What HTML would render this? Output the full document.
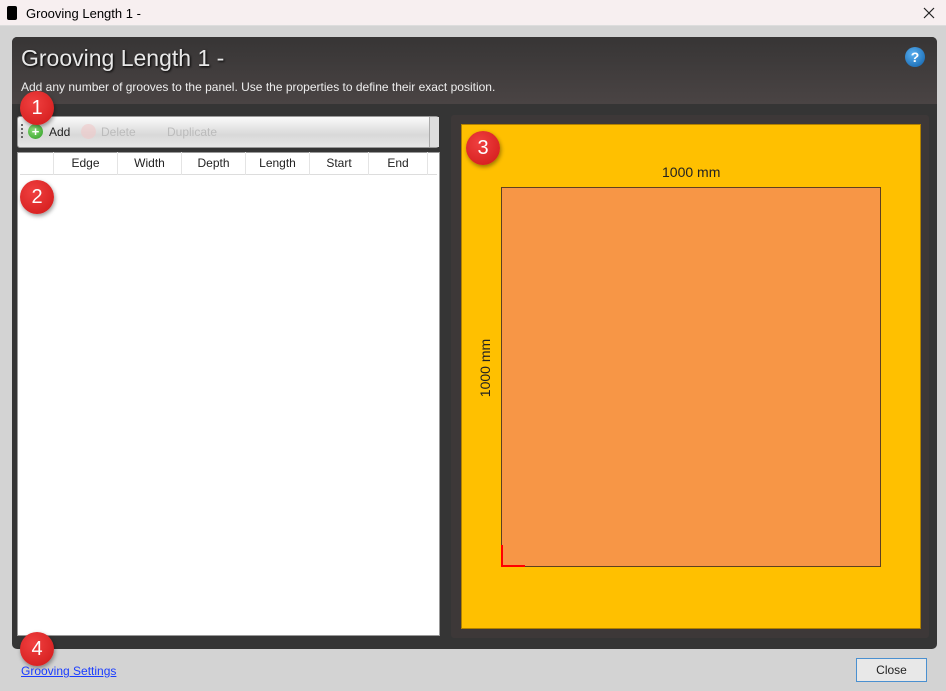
<!DOCTYPE html><html><head><style>
*{margin:0;padding:0;box-sizing:border-box}
body{width:946px;height:691px;background:#d3d3d3;font-family:"Liberation Sans",sans-serif;position:relative;overflow:hidden}
.a{position:absolute}
.badge{position:absolute;width:34px;height:34px;border-radius:50%;background:radial-gradient(circle at 40% 35%,#f04040,#d01818);color:#fff;font-size:20px;text-align:center;line-height:34px;box-shadow:1px 2px 4px rgba(0,0,0,.4)}
.hd{position:absolute;top:152px;height:23px;font-size:12px;color:#222;text-align:center;line-height:23px;border-right:1px solid #e4e4e4}
</style></head><body>
<div class="a" style="left:0;top:0;width:946px;height:26px;background:#f7eff0;border-bottom:1px solid #ddd"></div>
<div class="a" style="left:7px;top:6px;width:10px;height:14px;background:#000;border-radius:2px"></div>
<div class="a" style="left:26px;top:6px;font-size:13px;color:#000">Grooving Length 1 -</div>
<svg class="a" style="left:923px;top:7px" width="12" height="12"><path d="M1 1L11 11M11 1L1 11" stroke="#222" stroke-width="1.2"/></svg>
<div class="a" style="left:12px;top:37px;width:925px;height:612px;background:#353535;border-radius:5px"></div>
<div class="a" style="left:12px;top:37px;width:925px;height:67px;background:linear-gradient(#373535,#4a4444);border-radius:5px 5px 0 0"></div>
<div class="a" style="left:21px;top:45px;font-size:23px;color:#e8e8e8;text-shadow:1px 1px 2px #000">Grooving Length 1 -</div>
<div class="a" style="left:21px;top:80px;font-size:12px;color:#eee">Add any number of grooves to the panel. Use the properties to define their exact position.</div>
<div class="a" style="left:905px;top:47px;width:20px;height:20px;border-radius:50%;background:radial-gradient(circle at 40% 35%,#5ab0f0,#0d5ea8);color:#fff;font-weight:bold;font-size:14px;text-align:center;line-height:20px">?</div>
<div class="a" style="left:17px;top:116px;width:422px;height:32px;background:linear-gradient(#fafafa,#d8d8d8 60%,#e8e8e8);border:1px solid #999;border-radius:3px"></div>
<div class="a" style="left:429px;top:117px;width:10px;height:30px;background:#ddd;border-left:1px solid #aaa"></div>
<div class="a" style="left:21px;top:124px;width:2px;height:14px;border-left:2px dotted #666"></div>
<div class="a" style="left:28px;top:124px;width:15px;height:15px;border-radius:50%;background:radial-gradient(circle at 40% 35%,#8ee07a,#2a9a20);color:#fff;font-weight:bold;font-size:13px;line-height:15px;text-align:center">+</div>
<div class="a" style="left:49px;top:125px;font-size:12px;color:#222">Add</div>
<div class="a" style="left:81px;top:124px;width:15px;height:15px;border-radius:50%;background:#f0c8c8;opacity:.6"></div>
<div class="a" style="left:101px;top:125px;font-size:12px;color:#bbb">Delete</div>
<div class="a" style="left:167px;top:125px;font-size:12px;color:#bbb">Duplicate</div>
<div class="a" style="left:17px;top:152px;width:423px;height:484px;background:#fff;border:1px solid #999"></div>
<div class="a" style="left:20px;top:174px;width:417px;height:1px;background:#ddd"></div>
<div class="hd" style="left:20px;width:34px"></div>
<div class="hd" style="left:54px;width:64px">Edge</div>
<div class="hd" style="left:118px;width:64px">Width</div>
<div class="hd" style="left:182px;width:64px">Depth</div>
<div class="hd" style="left:246px;width:64px">Length</div>
<div class="hd" style="left:310px;width:59px">Start</div>
<div class="hd" style="left:369px;width:59px">End</div>
<div class="a" style="left:451px;top:115px;width:478px;height:523px;background:#3d3838;border-radius:3px"></div>
<div class="a" style="left:461px;top:124px;width:460px;height:505px;background:#ffc000;border:1px solid #b08000"></div>
<div class="a" style="left:501px;top:187px;width:380px;height:380px;background:#f79646;border:1px solid #604020"></div>
<div class="a" style="left:501px;top:545px;width:2px;height:22px;background:#f00"></div>
<div class="a" style="left:501px;top:565px;width:24px;height:2px;background:#f00"></div>
<div class="a" style="left:662px;top:164px;font-size:14px;color:#222">1000 mm</div>
<div class="a" style="left:455px;top:360px;font-size:14px;color:#222;transform:rotate(-90deg);width:60px;text-align:center">1000 mm</div>
<div class="badge" style="left:20px;top:91px">1</div>
<div class="badge" style="left:20px;top:180px">2</div>
<div class="badge" style="left:466px;top:131px">3</div>
<div class="badge" style="left:20px;top:632px">4</div>
<div class="a" style="left:21px;top:664px;font-size:12px;color:#1a3cff;text-decoration:underline">Grooving Settings</div>
<div class="a" style="left:856px;top:658px;width:71px;height:24px;background:#e8e8e8;border:1px solid #4a90d0;font-size:12px;text-align:center;line-height:22px;color:#222">Close</div>
</body></html>
